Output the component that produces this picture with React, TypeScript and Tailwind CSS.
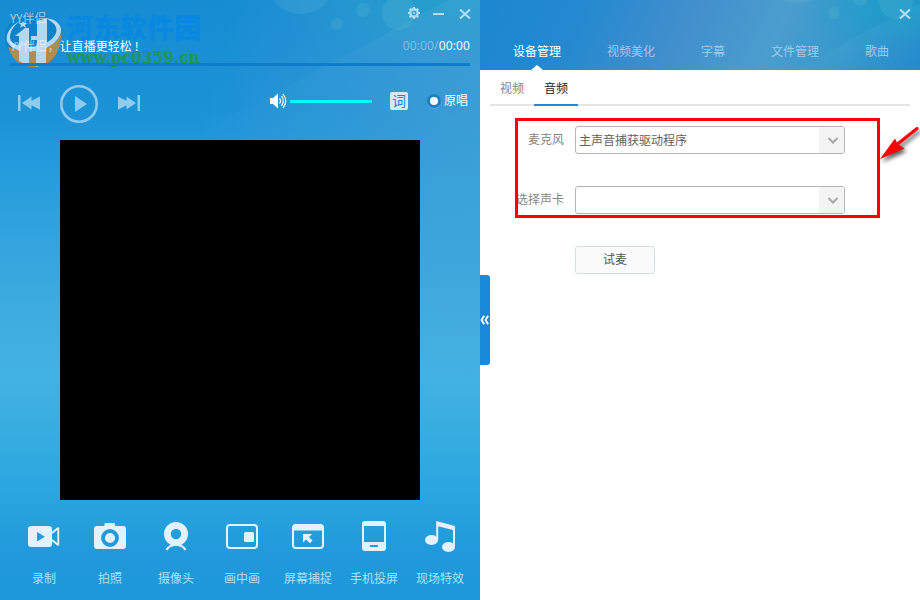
import type { ReactNode } from 'react'
import clsx from 'clsx'

const TABS = ['设备管理', '视频美化', '字幕', '文件管理', '歌曲']

const TOOLS: { label: string; icon: ReactNode }[] = [
  {
    label: '录制',
    icon: (
      <>
        <path
          fillRule="evenodd"
          d="M5 8h18a3 3 0 0 1 3 3v15a3 3 0 0 1-3 3H5a3 3 0 0 1-3-3V11a3 3 0 0 1 3-3Zm6 6v9.5l8-4.8Z"
        />
        <path
          d="m26 15 5.5-4.500h.8v16h-.8L26 22"
          fill="none"
          stroke="currentColor"
          strokeWidth="1.800"
        />
      </>
    ),
  },
  {
    label: '拍照',
    icon: (
      <>
        <path d="M13.500 5h8.500q1 0 1 1v2h8a3 3 0 0 1 3 3v17a3 3 0 0 1-3 3H5a3 3 0 0 1-3-3V11a3 3 0 0 1 3-3h7.500V6q0-1 1-1Z" />
        <circle cx="18" cy="20" r="7" fill="none" stroke="#2199da" strokeWidth="3.800" />
      </>
    ),
  },
  {
    label: '摄像头',
    icon: (
      <>
        <circle cx="18" cy="16" r="8.600" fill="none" stroke="currentColor" strokeWidth="6.800" />
        <path
          d="M8.500 32q2.500-4.500 8-5M27.500 32q-2.500-4.500-8-5"
          fill="none"
          stroke="currentColor"
          strokeWidth="2.200"
        />
      </>
    ),
  },
  {
    label: '画中画',
    icon: (
      <>
        <rect x="3" y="7" width="30" height="23" rx="3" fill="none" stroke="currentColor" strokeWidth="2" />
        <rect x="20" y="14" width="10" height="10" rx="1.500" />
      </>
    ),
  },
  {
    label: '屏幕捕捉',
    icon: (
      <>
        <rect x="3" y="7" width="30" height="23" rx="3" fill="none" stroke="currentColor" strokeWidth="2" />
        <path d="M3 9q0-3 3-3h24q3 0 3 3v3.500H3Z" />
        <path d="M13 16h9l-3 3 3.500 3.500-2.500 2.800-4-3.800-3 3Z" />
      </>
    ),
  },
  {
    label: '手机投屏',
    icon: (
      <path
        fillRule="evenodd"
        d="M9 3h18a3 3 0 0 1 3 3v24a3 3 0 0 1-3 3H9a3 3 0 0 1-3-3V6a3 3 0 0 1 3-3Zm-1 5v16h20V8Zm6 19v2h8v-2Z"
      />
    ),
  },
  {
    label: '现场特效',
    icon: (
      <g transform="translate(-1.500 0)">
        <path d="M15.700 3 34.500 8v21h-2V12L17.700 8.200V22h-2Z" />
        <ellipse cx="11" cy="22" rx="6.500" ry="5" />
        <ellipse cx="28" cy="29" rx="6.500" ry="5" />
      </g>
    ),
  },
]

function CloseIcon() {
  return (
    <svg width="12" height="12" viewBox="0 0 12 12" className="text-[#b9e0f2]">
      <path d="m1 1.500 10 9m0-9-10 9" stroke="currentColor" strokeWidth="2" />
    </svg>
  )
}

function GearIcon() {
  return (
    <svg width="14" height="14" viewBox="0 0 14 14" fill="none" stroke="#b0dcef">
      <circle cx="7" cy="7" r="3.700" strokeWidth="2.400" />
      <circle cx="7" cy="7" r="1" fill="#b0dcef" stroke="none" />
      <path
        d="M7 1v2M7 11v2M1 7h2M11 7h2M2.700 2.700l1.500 1.500M9.800 9.800l1.500 1.500M2.700 11.300l1.500-1.500M9.800 4.200l1.500-1.500"
        strokeWidth="2.200"
      />
    </svg>
  )
}

// Light beam and bubbles behind the title area, shared by both windows
function Bubbles({ className }: { className: string }) {
  return (
    <svg
      width="480"
      height="140"
      viewBox="0 0 480 140"
      className={clsx('pointer-events-none absolute', className)}
    >
      <defs>
        <linearGradient id="beam" x1="0" y1="0" x2="0" y2="1">
          <stop offset="0" stopColor="#fff" stopOpacity="0.050" />
          <stop offset="1" stopColor="#fff" stopOpacity="0" />
        </linearGradient>
      </defs>
      <path d="M449 0 187 140H480V0Z" fill="url(#beam)" />
      <g fill="#8fd0dc" fillOpacity="0.130">
        <ellipse cx="301" cy="-8" rx="29" ry="22" />
        <circle cx="363" cy="10" r="7" />
        <circle cx="337" cy="24" r="6" />
        <circle cx="399" cy="13" r="17" />
      </g>
    </svg>
  )
}

function Watermark() {
  return (
    <svg width="230" height="80" className="pointer-events-none absolute left-0 top-0">
      <ellipse cx="32" cy="38" rx="27" ry="26" fill="#0a7fc4" fillOpacity="0.700" />
      <path d="M8 47c4 13 13 20 26 20 15 0 27-12 27-33-5 13-27 22-53 13Z" fill="#b28b50" />
      <g fill="#b4d8f0">
        <path d="M22 20C10 25 4 36 8 43c6 9 20 10 32 7 14-4 22-13 21-21-1-6-6-10-16-11 9 4 13 9 11 15-3 8-14 13-26 14-12 0-21-4-20-11 1-7 5-12 12-16Z" />
        <path d="m15 36 10-8h4v20H19V36Z" />
        <path d="M19 48h10v18l-10-5Z" />
        <path d="M31 36h6V21l10-3v30H37v-8h-6Z" />
        <path d="M36 48h10v15l-10 4Z" />
        <path d="m23 21 1 2h3l-2 2 1 3-3-2-3 2 1-3-2-2h3Z" />
      </g>
      <text
        x="66"
        y="38"
        textLength="135"
        fontSize="27"
        fontWeight="900"
        fill="#0788e4"
        fillOpacity="0.880"
        className="font-['Noto_Sans_CJK_SC',sans-serif]"
      >
        河东软件园
      </text>
      <text
        x="67"
        y="63"
        textLength="133"
        lengthAdjust="spacingAndGlyphs"
        fontSize="17"
        fontWeight="700"
        fill="#219451"
        fillOpacity="0.900"
        className="font-['DejaVu_Serif',serif]"
      >
        www.pc0359.cn
      </text>
    </svg>
  )
}

function Player() {
  return (
    <section className="relative h-[600px] w-[480px] shrink-0 overflow-hidden bg-[linear-gradient(180deg,#178cd3_0%,#1b91d6_18%,#289ddd_30%,#41aee0_56%,#42b2e3_63%,#2ba6df_82%,#2199da_92%,#1e97d8_100%)]">
      <div className="absolute inset-0 bg-[radial-gradient(ellipse_280px_270px_at_100%_18%,#62a9d470,#62a9d400)]" />
      <div className="absolute inset-0 bg-[radial-gradient(ellipse_150px_60px_at_90%_0%,#22a8c580,#22a8c500)]" />
      <Bubbles className="left-0 top-0" />
      <Watermark />

      <div className="relative flex h-full flex-col">
        <header className="flex h-[31px] items-start justify-between pl-[10px] pr-[9px] pt-[6px]">
          <span className="pt-[3px] text-[12px] leading-[18px] tracking-[-0.100px] text-white/60">
            YY伴侣
          </span>
          <div className="flex h-[14px] items-center">
            <GearIcon />
            <span className="ml-3 mt-px h-[2px] w-[11px] bg-[#b0dcef]" />
            <span className="ml-[15px] mt-[2px]">
              <CloseIcon />
            </span>
          </div>
        </header>

        <div className="flex h-[32px] items-center justify-between px-[10px] pb-[2px] text-[12px] text-white">
          <span>
            <span className="tracking-[0.200px] text-white/60">YY伴侣，</span>
            让直播更轻松
            <span className="ml-[3px]">!</span>
          </span>
          <span className="font-['Open_Sans',sans-serif] tracking-[0.150px]">
            <span className="text-[#83bfe4]">00:00/</span>00:00
          </span>
        </div>
        <div className="mx-[10px] h-[3px] bg-[#0f7ccb]" />

        <div className="flex h-[74px] items-center pl-[18px] pr-[12px]">
          <svg width="23" height="16" fill="#8fcbec">
            <path d="M0 0h2.500v16H0ZM4 8l9.500-6.500v4.300L22 1.500v13.300l-8.500-4.500v4.200Z" />
          </svg>
          <svg width="38" height="38" className="ml-[19px] mt-px">
            <circle cx="19" cy="19" r="17.700" fill="none" stroke="#8fcbec" strokeWidth="2.600" />
            <path d="m15 11 12 8-12 8Z" fill="#8fcbec" />
          </svg>
          <svg width="23" height="16" fill="#8fcbec" className="ml-5">
            <path d="M19.500 0H22v16h-2.500ZM18 8 8.500 1.500v4.300L0 1.500v13.300l8.500-4.500v4.200Z" />
          </svg>

          <div className="mb-[5px] ml-auto flex items-center">
            <svg width="17" height="16" viewBox="0 0 17 16" fill="#fff">
              <path d="M0 5h3l5-4.500v15L3 11H0Z" />
              <path
                d="M9.500 5.300q2 2.700 0 5.400M11.500 3q3.500 5 0 10M13 1q5.500 7 0 14"
                fill="none"
                stroke="#fff"
                strokeWidth="1.200"
              />
            </svg>
            <div className="ml-[3px] mt-px h-[3px] w-[82px] bg-[#00fff0]" />
            <span className="ml-[18px] flex h-[18px] w-[18px] items-center justify-center rounded-[2px] bg-[#d5eaf6] pb-[2px] text-[14px] leading-none text-[#1589c8]">
              词
            </span>
            <span className="ml-[19px] flex h-[14px] w-[14px] items-center justify-center rounded-full bg-[#1c7fc4] shadow-[0_1px_0_#58aede]">
              <span className="h-2 w-2 rounded-full bg-white" />
            </span>
            <span className="mb-[2px] ml-[3px] text-[12px] leading-[16px] text-white">原唱</span>
          </div>
        </div>

        <div className="mx-auto h-[360px] w-[360px] bg-black" />

        <footer className="flex pl-[11px] pt-[18px]">
          {TOOLS.map((tool) => (
            <div key={tool.label} className="flex w-[66px] flex-col items-center">
              <svg width="36" height="36" viewBox="0 0 36 36" fill="currentColor" className="text-[#e2f2fe]">
                {tool.icon}
              </svg>
              <span className="mt-[15px] text-[12px] leading-[18px] text-[#a5e3fb]">
                {tool.label}
              </span>
            </div>
          ))}
        </footer>
      </div>
    </section>
  )
}

function SelectRow({ label, value }: { label: string; value?: string }) {
  return (
    <div className="flex h-[28px] items-center">
      <span className="w-[84px] pb-[2px] text-right text-[12px] text-[#858585]">{label}</span>
      <div className="ml-[11px] flex h-[28px] w-[270px] overflow-hidden rounded-[3px] border border-[#b5b5b5] bg-white">
        <span className="flex-1 pl-[3px] text-[12px] leading-[26px] text-[#606060]">{value}</span>
        <span className="flex w-[25px] items-center justify-center bg-[#f4f4f4]">
          <svg width="10" height="8" className="ml-[2px] mt-[2px]">
            <path d="m.5 1 4.500 4.500L9.500 1" fill="none" stroke="#a8a8a8" strokeWidth="2" />
          </svg>
        </span>
      </div>
    </div>
  )
}

function SettingsPanel() {
  return (
    <section className="relative h-[600px] w-[440px] bg-white">
      <header className="relative flex h-[70px] flex-col overflow-hidden bg-[linear-gradient(115deg,#1b87d0_0%,#2489d0_22%,#428fcd_46%,#4b9dce_66%,#3598cc_82%,#1e88cc_100%)]">
        <div className="absolute inset-0 bg-[radial-gradient(ellipse_100px_45px_at_95%_10%,#16a0c8b0,#16a0c800)]" />
        <Bubbles className="left-[17px] top-[-11px]" />
        <div className="relative flex h-[40px] justify-end pr-[9px] pt-[8px]">
          <CloseIcon />
        </div>
        <nav className="relative flex h-[30px] gap-[46px] pl-[33px] text-[12px] leading-[22px] text-[#a3c9e8]">
          {TABS.map((tab, i) => (
            <span key={tab} className={clsx('relative', i === 0 && 'text-white')}>
              {tab}
              {i === 0 && (
                <svg width="12" height="5" className="absolute bottom-0 left-[18px]">
                  <path d="M0 5 6 0l6 5Z" fill="#fff" />
                </svg>
              )}
            </span>
          ))}
        </nav>
      </header>

      <div className="mx-[10px] flex h-[36px] border-b-2 border-[#e5e5e5] text-center text-[12px] leading-[35px]">
        <span className="w-[44px] text-[#858585]">视频</span>
        <span className="h-[36px] w-[44px] border-b-2 border-[#1a8cda] text-[#222]">音频</span>
      </div>

      <div className="pt-[20px]">
        <SelectRow label="麦克风" value="主声音捕获驱动程序" />
        <div className="h-8" />
        <SelectRow label="选择声卡" />
        <button className="ml-[95px] mt-[32px] block h-[28px] w-[80px] rounded-[3px] border border-[#d5dce2] bg-[#fafafa] pb-[2px] text-[12px] leading-[24px] text-[#555]">
          试麦
        </button>
      </div>

      {/* collapse handle on the seam between the two windows */}
      <button className="absolute left-0 top-[275px] flex h-[90px] w-[10px] items-center justify-center rounded-r-[3px] bg-[#198ad9]">
        <svg width="10" height="10" fill="none" stroke="#fff" strokeWidth="1.800">
          <path d="M4.200.8 1.500 5l2.700 4.200M8.200.8 5.500 5l2.700 4.200" />
        </svg>
      </button>

      {/* callout */}
      <div className="pointer-events-none absolute left-[35px] top-[118px] h-[100px] w-[365px] border-[3px] border-[#f00]" />
      <svg
        width="44"
        height="46"
        className="pointer-events-none absolute left-[396px] top-[122px] drop-shadow-[2px_3px_2px_rgba(0,0,0,0.650)]"
      >
        <path d="M41 6.500 21 22.500" stroke="#f00" strokeWidth="3" strokeLinecap="round" />
        <path d="m4 37 15-20.500 2.500 5.500 7 4.500Z" fill="#f00" />
      </svg>
    </section>
  )
}

export default function App() {
  return (
    <main className="flex h-[600px] w-[920px] overflow-hidden bg-white font-['Noto_Sans_CJK_SC',sans-serif]">
      <Player />
      <SettingsPanel />
    </main>
  )
}
